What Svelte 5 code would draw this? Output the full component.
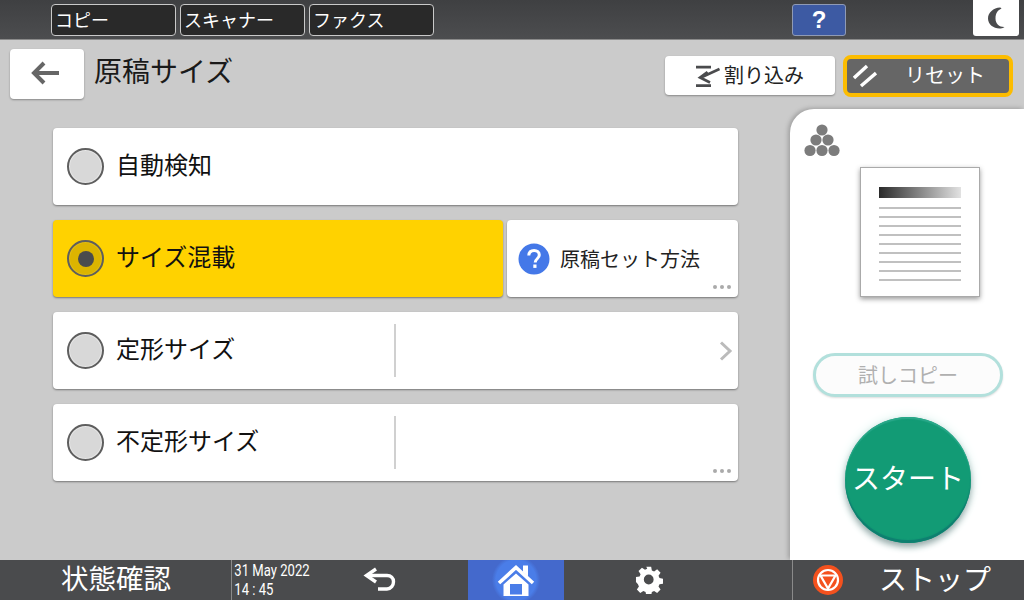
<script>
	const modes = ['コピー', 'スキャナー', 'ファクス'];
	const lines = [0, 1, 2, 3, 4, 5, 6, 7, 8];
</script>

<div class="screen">
	<header class="topbar">
		<div class="modes">
			{#each modes as mode}
				<button class="mode">{mode}</button>
			{/each}
		</div>
		<button class="help">?</button>
		<button class="moon" aria-label="節電">
			<svg width="22" height="24" viewBox="0 0 22 24"><path d="M15 1.500C8.500 2 3 6.500 3 12.500S9 23 15.500 22.500c2-.2 3-.8 4-1.500-5 .2-9-3-9-8.500S13 4 16.500 2.500C16 2 15.500 1.500 15 1.500z" fill="#4a4b4d"/></svg>
		</button>
	</header>

	<main class="main">
		<div class="head">
			<button class="back" aria-label="戻る">
				<svg width="30" height="26" viewBox="0 0 30 26"><path d="M14 3 4 13l10 10M4.500 13H29" fill="none" stroke="#666" stroke-width="4"/></svg>
			</button>
			<h1>原稿サイズ</h1>
			<button class="interrupt">
				<svg width="24" height="24" viewBox="0 0 24 24" fill="none" stroke="#4a4b4d"><path d="M0 3.200h15M0 21.700h15" stroke-width="2.800"/><path d="M23.500 5 5 13.500M11.500 8 4 13.500l10 5" stroke-width="2.600"/></svg>
				<span>割り込み</span>
			</button>
			<button class="reset">
				<svg width="24" height="24" viewBox="0 0 24 24" fill="none" stroke="#fff" stroke-width="3.400"><path d="M1 14 14 2M8 22 23 9"/></svg>
				<span>リセット</span>
			</button>
		</div>

		<div class="content">
			<div class="list">
				<div class="row card">
					<span class="radio"></span>
					<span class="label">自動検知</span>
				</div>
				<div class="row split">
					<div class="card selected">
						<span class="radio on"><i></i></span>
						<span class="label">サイズ混載</span>
					</div>
					<div class="card howto">
						<svg width="32" height="32" viewBox="0 0 32 32"><circle cx="16" cy="16" r="15.500" fill="#4478e8"/><path d="M10.800 12.500c.2-3.300 2.400-5 5.300-5 3 0 5.200 1.800 5.200 4.500 0 3.800-4.100 3.700-4.100 7.500" fill="none" stroke="#fff" stroke-width="3"/><rect x="15.300" y="21.500" width="3.200" height="3.400" fill="#fff"/></svg>
						<span class="howto-text">原稿セット方法</span>
						<span class="dots"><i></i><i></i><i></i></span>
					</div>
				</div>
				<div class="row card">
					<span class="radio"></span>
					<span class="label wide">定形サイズ</span>
					<span class="divider"></span>
					<svg class="chevron" width="14" height="20" viewBox="0 0 14 20"><path d="M2 1.500 11 10l-9 8.500" fill="none" stroke="#bbb" stroke-width="3"/></svg>
				</div>
				<div class="row card">
					<span class="radio"></span>
					<span class="label wide">不定形サイズ</span>
					<span class="divider"></span>
					<span class="dots"><i></i><i></i><i></i></span>
				</div>
			</div>

			<aside class="side">
				<svg class="toner" width="36" height="33" viewBox="0 0 36 33" fill="#7c7c7c">
					<circle cx="18" cy="6" r="5.600"/>
					<circle cx="12" cy="16" r="5.600"/>
					<circle cx="24" cy="16" r="5.600"/>
					<circle cx="6" cy="26.500" r="5.600"/>
					<circle cx="18" cy="26.500" r="5.600"/>
					<circle cx="30" cy="26.500" r="5.600"/>
				</svg>
				<div class="paper">
					<div class="grad"></div>
					{#each lines as l}
						<div class="line"></div>
					{/each}
				</div>
				<button class="sample">試しコピー</button>
				<button class="start">スタート</button>
			</aside>
		</div>
	</main>

	<footer class="bottombar">
		<div class="status">状態確認</div>
		<div class="clock">
			<div>31 May 2022</div>
			<div>14 : 45</div>
		</div>
		<div class="slot undo">
			<svg width="36" height="28" viewBox="0 0 36 28" fill="none" stroke="#fff" stroke-width="3.400"><path d="M14 3 4.500 9.500 14 16"/><path d="M5 9.500h20c4 0 6.500 2.600 6.500 6.200S29 23 25 23H16"/></svg>
		</div>
		<div class="slot home">
			<svg width="40" height="34" viewBox="0 0 40 34" fill="#fff"><path d="M3 20 20 4.500 37 20" fill="none" stroke="#fff" stroke-width="3.600"/><path d="M27 2.500h5v11l-5-4.500z"/><path fill-rule="evenodd" d="M7.500 21.500 20 10.500l12.500 11V33h-25zM14 21v10.500h12V21z"/></svg>
		</div>
		<div class="slot gear">
			<svg width="28" height="28" viewBox="0 0 28 28"><path fill="#fff" fill-rule="evenodd" d="M11.500 1h5l.7 3.700 2.300 1 3.100-2.100 3.500 3.500-2.100 3.100 1 2.300 3.700.7v5l-3.700.7-1 2.300 2.100 3.100-3.500 3.500-3.100-2.100-2.300 1-.7 3.700h-5l-.7-3.700-2.300-1-3.100 2.100-3.500-3.500 2.100-3.100-1-2.300L1 16.500v-5l3.700-.7 1-2.300-2.100-3.100 3.500-3.500 3.100 2.100 2.300-1zM14 9a5 5 0 1 0 0 10 5 5 0 0 0 0-10z" transform="translate(0 -.2) scale(.98)"/></svg>
		</div>
		<div class="stop">
			<svg width="30" height="30" viewBox="0 0 30 30"><circle cx="15" cy="15" r="15" fill="#f4511e"/><circle cx="15" cy="15" r="10" fill="none" stroke="#fff" stroke-width="2.200"/><path d="M7.500 10.500h15L15 23.500z" fill="none" stroke="#fff" stroke-width="2.200"/></svg>
			<span>ストップ</span>
		</div>
	</footer>
</div>

<style>
	:global(body) {
		margin: 0;
		background: #cbcbcb;
	}

	.screen {
		width: 1024px;
		height: 600px;
		display: flex;
		flex-direction: column;
		overflow: hidden;
		font-family: "Noto Sans CJK JP", "Noto Sans", sans-serif;
		color: #111;
	}

	button {
		font-family: inherit;
		padding: 0;
		border: none;
		cursor: pointer;
	}

	/* top bar */
	.topbar {
		height: 40px;
		flex: none;
		display: flex;
		align-items: flex-start;
		padding-left: 51px;
		background: linear-gradient(#3f4042, #4c4d4f);
		border-bottom: 1px solid #8a8a8a;
		box-sizing: border-box;
	}

	.modes {
		display: flex;
		gap: 4px;
		margin-top: 4px;
	}

	.mode {
		width: 125px;
		height: 32px;
		box-sizing: border-box;
		padding: 0 0 3px 3px;
		text-align: left;
		font-size: 18px;
		line-height: 26px;
		color: #fff;
		background: #292929;
		border: 1px solid #c9c9c9;
		border-radius: 4px;
	}

	.help {
		width: 54px;
		height: 32px;
		margin: 4px 0 0 358px;
		box-sizing: border-box;
		font-family: "Liberation Sans", sans-serif;
		font-size: 24px;
		font-weight: 700;
		color: #fff;
		background: #3d5aa3;
		border: 1px solid #8f9ab5;
		border-radius: 3px;
	}

	.moon {
		width: 46px;
		height: 36px;
		margin-left: 127px;
		background: #fff;
		border-radius: 0 0 3px 3px;
		display: flex;
		align-items: center;
		justify-content: center;
	}

	/* main */
	.main {
		flex: 1;
		min-height: 0;
		display: flex;
		flex-direction: column;
		background: #cbcbcb;
	}

	.head {
		height: 69px;
		flex: none;
		display: flex;
		align-items: flex-start;
		padding-left: 10px;
		box-sizing: border-box;
	}

	.back {
		width: 74px;
		height: 50px;
		margin-top: 9px;
		background: #fff;
		border-radius: 4px;
		box-shadow: 0 1px 2px #888;
		display: flex;
		align-items: center;
		justify-content: center;
		padding: 0 4px 2px 0;
		box-sizing: border-box;
	}

	h1 {
		margin: 9px auto 0 10px;
		font-size: 28px;
		font-weight: 400;
		line-height: 42px;
		color: #1a1a1a;
	}

	.interrupt {
		width: 170px;
		height: 39px;
		margin-top: 16px;
		background: #fff;
		border-radius: 4px;
		box-shadow: 0 1px 2px #888;
		display: flex;
		align-items: center;
		padding-left: 31px;
		box-sizing: border-box;
		font-size: 20px;
		color: #222;
	}

	.interrupt span {
		margin: 0 0 2px 4px;
	}

	.reset {
		width: 170px;
		height: 42px;
		margin: 15px 11px 0 8px;
		box-sizing: border-box;
		background: #666;
		border: 4px solid #fcbc00;
		border-radius: 8px;
		display: flex;
		align-items: center;
		padding-left: 6px;
		font-size: 20px;
		color: #fff;
	}

	.reset span {
		margin: 0 0 3px 28px;
	}

	.content {
		flex: 1;
		min-height: 0;
		display: flex;
	}

	.list {
		width: 685px;
		margin: 19px 0 0 53px;
		display: flex;
		flex-direction: column;
		gap: 15px;
	}

	.card {
		background: #fff;
		border-radius: 4px;
		box-shadow: 0 1px 2px #777;
		display: flex;
		align-items: center;
		position: relative;
	}

	.row {
		height: 77px;
		flex: none;
	}

	.split {
		display: flex;
		gap: 4px;
	}

	.selected {
		width: 450px;
		background: #ffd200;
	}

	.howto {
		flex: 1;
		padding-left: 11px;
	}

	.howto-text {
		margin-left: 10px;
		font-size: 20px;
		color: #222;
	}

	.radio {
		width: 37px;
		height: 37px;
		margin-left: 14px;
		flex: none;
		box-sizing: border-box;
		border: 2px solid #5e5e5e;
		border-radius: 50%;
		background: #d8d8d8;
		box-shadow: inset 0 0 0 1px #e8e8e8;
		display: flex;
		align-items: center;
		justify-content: center;
	}

	.radio.on {
		background: #dcb400;
		box-shadow: inset 0 0 0 1px #e3bd10;
	}

	.radio i {
		width: 16px;
		height: 16px;
		border-radius: 50%;
		background: #4a4b4d;
	}

	.label {
		margin-left: 12px;
		padding-bottom: 6px;
		font-size: 24px;
		color: #111;
	}

	.label.wide {
		width: 278px;
		flex: none;
	}

	.divider {
		width: 2px;
		height: 53px;
		background: #d0d0d0;
	}

	.chevron {
		position: absolute;
		right: 5px;
		top: 29px;
	}

	.dots {
		position: absolute;
		right: 7px;
		bottom: 8px;
		display: flex;
		gap: 3px;
	}

	.dots i {
		width: 4px;
		height: 4px;
		border-radius: 50%;
		background: #aaa;
	}

	/* side panel */
	.side {
		width: 234px;
		margin-left: auto;
		padding-left: 2px;
		box-sizing: border-box;
		background: #fff;
		border-top-left-radius: 24px;
		box-shadow: -2px -1px 4px #a0a0a0;
		display: flex;
		flex-direction: column;
		align-items: center;
		position: relative;
	}

	.toner {
		position: absolute;
		left: 14px;
		top: 15px;
	}

	.paper {
		width: 120px;
		height: 130px;
		margin: 58px 0 0 24px;
		box-sizing: border-box;
		padding: 19px 18px 0;
		border: 1px solid #aaa;
		box-shadow: 0 2px 5px #999;
		background: #fff;
		display: flex;
		flex-direction: column;
		gap: 7px;
	}

	.grad {
		height: 11px;
		margin-bottom: 2px;
		background: linear-gradient(90deg, #2a2a2a, #e2e2e2);
	}

	.line {
		height: 2px;
		background: #c0c0c0;
	}

	.sample {
		width: 190px;
		height: 44px;
		margin-top: 56px;
		padding-bottom: 2px;
		box-sizing: border-box;
		border: 3px solid #b2e0dc;
		border-radius: 22px;
		background: #fcfcfc;
		font-size: 20px;
		color: #b0b0b0;
		box-shadow: 0 1px 2px #ddd;
	}

	.start {
		width: 126px;
		height: 126px;
		margin-top: 20px;
		padding-bottom: 6px;
		border-radius: 50%;
		background: #129b75;
		font-size: 28px;
		color: #fff;
		box-shadow: inset 0 2px 1px #2aa88a, inset 0 -3px 1px #0e7f70, 0 4px 6px #9aa, 0 0 12px #d8f2ee;
	}

	/* bottom bar */
	.bottombar {
		height: 40px;
		flex: none;
		display: flex;
		background: #4a4b4d;
		color: #fff;
		position: relative;
	}

	.status {
		width: 232px;
		flex: none;
		box-sizing: border-box;
		padding-left: 61px;
		font-size: 27.500px;
		line-height: 35px;
		border-right: 1px solid #8a8a8a;
	}

	.clock {
		width: 115px;
		flex: none;
		padding: 1px 0 0 3px;
		box-sizing: border-box;
		font-family: "Roboto", sans-serif;
		font-size: 17px;
		line-height: 19px;
		white-space: nowrap;
		transform: scaleX(.77);
		transform-origin: left top;
	}

	.slot {
		display: flex;
		align-items: center;
		justify-content: center;
		flex: none;
	}

	.undo {
		width: 74px;
		margin-left: -4px;
	}

	.home {
		width: 96px;
		margin-left: 51px;
		background: radial-gradient(circle at 50% 50%, #4a7de8 0 20px, #4469cc 24px);
	}

	.gear {
		width: 228px;
		justify-content: flex-start;
		padding-left: 71px;
		box-sizing: border-box;
	}

	.stop {
		flex: 1;
		border-left: 1px solid #8a8a8a;
		display: flex;
		align-items: center;
		padding-left: 20px;
		font-size: 28px;
	}

	.stop span {
		margin: 0 0 5px 36px;
		white-space: nowrap;
	}
</style>
